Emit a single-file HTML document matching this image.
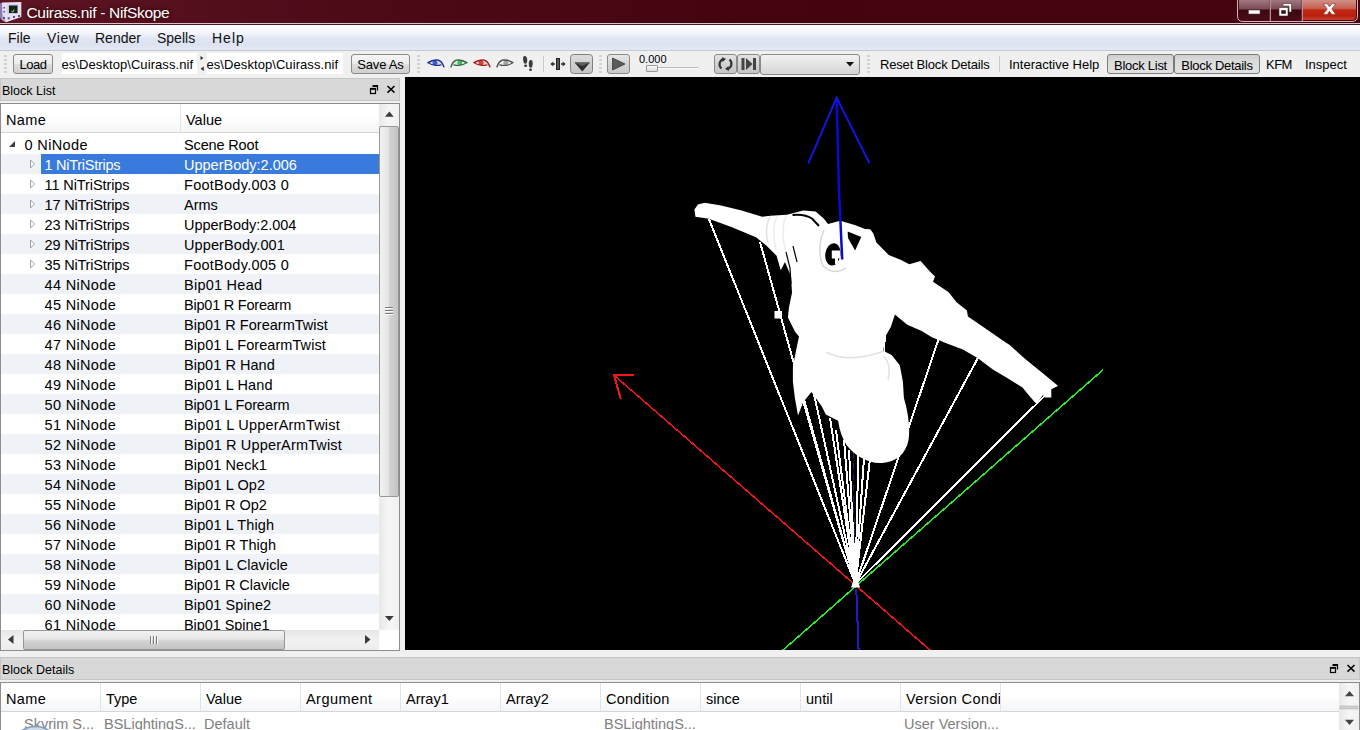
<!DOCTYPE html>
<html>
<head>
<meta charset="utf-8">
<title>Cuirass.nif - NifSkope</title>
<style>
*{box-sizing:border-box;margin:0;padding:0}
html,body{width:1360px;height:730px;overflow:hidden;background:#f0f0f0;font-family:"Liberation Sans",sans-serif;color:#000}
.abs{position:absolute}
#title{left:0;top:0;width:1360px;height:25px;background:linear-gradient(90deg,#5e1524 0%,#4d0a17 25%,#43040e 60%,#450510 100%);border-bottom:1px solid #4c1a24;box-shadow:inset 0 -1px 0 #dcc0c6}
#title .t{left:26.5px;top:4px;font-size:15.5px;letter-spacing:-0.32px;color:#fff;white-space:nowrap;text-shadow:0 0 4px #200}
#menu{left:0;top:25px;width:1360px;height:26px;background:linear-gradient(180deg,#ffffff 0%,#f4f6fb 30%,#e1e5f3 55%,#dde2f1 80%,#e6e9f5 100%);border-bottom:1px solid #c5c8d4}
#menu span{position:absolute;top:5px;font-size:14px;color:#111;white-space:nowrap}
#tool{left:0;top:51px;width:1360px;height:27px;background:#f0f0f0}
.btn{position:absolute;top:54px;height:21px;border:1px solid #8a8a8a;border-radius:3px;background:linear-gradient(180deg,#f6f6f6 0%,#ececec 48%,#dddddd 52%,#d0d0d0 100%);font-size:13px;text-align:center;line-height:19px;white-space:nowrap}
.btn.pr{background:linear-gradient(180deg,#cfcfcf 0%,#dadada 30%,#e2e2e2 100%);line-height:21px;border-color:#7c7c7c}
.edit{position:absolute;top:53px;height:21px;background:#fff;font-size:13px;line-height:23px;white-space:nowrap;overflow:hidden}
.tt{position:absolute;top:57px;font-size:13px;white-space:nowrap}
.grip{position:absolute;top:55px;width:3px;height:20px;background:repeating-linear-gradient(180deg,#d2d2d2 0 2px,transparent 2px 4px)}
.dockt{position:absolute;height:23px;background:#d8d8d8;border:1px solid #c6c6c6;font-size:12.5px;line-height:24px;overflow:hidden;padding-left:1px;white-space:nowrap}
#view{left:405px;top:77px;width:955px;height:573px;background:#000;overflow:hidden}
#tree{left:0;top:103px;width:400px;height:548px;background:#fff;border:1px solid #8a8c90;overflow:hidden}
.row{position:absolute;left:0;width:378px;height:20px;font-size:14.5px;line-height:22px;white-space:nowrap}
.row.alt{background:#eff2f7}
.row b{position:absolute;font-weight:normal;top:0;white-space:pre}
.row .sel{position:absolute;left:40px;top:0;width:338px;height:20px;background:#387bdc}
.row .ar{position:absolute}
.hdr{position:absolute;top:0;height:29px;background:linear-gradient(180deg,#ffffff 0%,#ffffff 45%,#f4f5f7 100%);border-right:1px solid #e0e3ea;border-bottom:1px solid #d5d5d5;font-size:14.5px;line-height:32px;white-space:nowrap;overflow:hidden}
.sbv{position:absolute;background:linear-gradient(90deg,#e8e8e8 0%,#f6f6f6 50%,#f0f0f0 100%)}
.thumbv{position:absolute;border:1px solid #979797;border-radius:2px;background:linear-gradient(90deg,#f2f2f2 0%,#e6e6e6 45%,#d2d2d2 55%,#c4c4c4 100%)}
.thumbh{position:absolute;border:1px solid #979797;border-radius:2px;background:linear-gradient(180deg,#f2f2f2 0%,#e6e6e6 45%,#d2d2d2 55%,#c4c4c4 100%)}
#det{left:0;top:682px;width:1360px;height:60px;background:#fff;border:1px solid #8a8c90;overflow:hidden}
#det .g{position:absolute;top:31px;font-size:14.5px;line-height:20px;color:#808080;white-space:nowrap}
</style>
</head>
<body>
<div id="title" class="abs"><span class="abs t">Cuirass.nif - NifSkope</span></div>
<svg class="abs" style="left:0;top:0" width="24" height="24" viewBox="0 0 24 24">
<path d="M2,2.600 L21.300,2 L21.300,17 L6,22.300 L1.500,19.500 Z" fill="#e6dff2"/>
<path d="M0,3.500 L2,2.600 L2.500,19.800 L0,18 Z" fill="#8c7cb6"/>
<path d="M2.500,14 L6,22.300 L1.500,19.500 Z" fill="#b0a4d0"/>
<path d="M7.500,4.500 H18 V14 H7.500 Z" fill="#cfc8e0"/>
<rect x="9" y="5.500" width="8.500" height="7.500" fill="#122412"/>
<path d="M11.500,11.500 L13,12 L14,9.500" stroke="#9ad09a" stroke-width="1" fill="none"/>
<g fill="#5c4c84"><rect x="3" y="17" width="2" height="2"/><rect x="7.700" y="17.300" width="2" height="2"/><rect x="13" y="16" width="2" height="2"/><rect x="18" y="15" width="2" height="2"/><rect x="3.500" y="7" width="1.500" height="1.500"/><rect x="3.500" y="11" width="1.500" height="1.500"/></g>
</svg>
<svg class="abs" style="left:1236px;top:0" width="124" height="24" viewBox="1236 0 124 24">
<defs>
<linearGradient id="wc1" x1="0" y1="0" x2="0" y2="1"><stop offset="0" stop-color="#a07880"/><stop offset="0.45" stop-color="#7c4a54"/><stop offset="0.5" stop-color="#3c0610"/><stop offset="1" stop-color="#4a0c16"/></linearGradient>
<linearGradient id="wc2" x1="0" y1="0" x2="0" y2="1"><stop offset="0" stop-color="#d09088"/><stop offset="0.42" stop-color="#c86050"/><stop offset="0.5" stop-color="#c02814"/><stop offset="0.8" stop-color="#b8200c"/><stop offset="1" stop-color="#c84030"/></linearGradient>
</defs>
<path d="M1237.500,-1 V16 Q1237.500,21.500 1243,21.500 H1352 Q1357.500,21.500 1357.500,16 V-1 Z" fill="#4a0a14" stroke="#d8b0b8" stroke-width="1"/>
<path d="M1239,0 V16 Q1239,20 1243,20 H1269.500 V0 Z" fill="url(#wc1)"/>
<rect x="1271" y="0" width="30.500" height="20" fill="url(#wc1)"/>
<path d="M1303,0 H1356 V16 Q1356,20 1352,20 H1303 Z" fill="url(#wc2)"/>
<path d="M1270.300,0 V21 M1302.300,0 V21" stroke="#d8b0b8" stroke-width="1"/>
<rect x="1248.500" y="10" width="11.500" height="4" fill="#fff" stroke="#5a4048" stroke-width="0.600"/>
<path d="M1283,3.500 H1291.500 V12 H1289 V6 H1283 Z" fill="#fff" stroke="#40262c" stroke-width="0.600"/>
<path d="M1279,7.500 H1288 V16 H1279 Z M1281.500,10.500 V13.500 H1285.500 V10.500 Z" fill="#fff" fill-rule="evenodd" stroke="#40262c" stroke-width="0.600"/>
<path d="M1323.300,3.800 L1327.300,3.800 L1329.500,6.800 L1331.700,3.800 L1335.700,3.800 L1331.800,9 L1335.900,14.400 L1331.700,14.400 L1329.500,11.300 L1327.300,14.400 L1323.100,14.400 L1327.200,9 Z" fill="#fff" stroke="#702018" stroke-width="0.600"/>
</svg>
<div id="menu" class="abs">
<span style="left:8px">File</span><span style="left:47px;letter-spacing:0.6px">View</span><span style="left:95px">Render</span><span style="left:157px">Spells</span><span style="left:212px;letter-spacing:1px">Help</span>
</div>
<div id="tool" class="abs"></div>
<div class="grip" style="left:4px"></div>
<div class="btn" style="left:13px;width:40px;height:20px;letter-spacing:-0.5px">Load</div>
<div class="edit" style="left:62px;width:135px;text-indent:-0.5px;letter-spacing:0.07px">es\Desktop\Cuirass.nif</div>
<div class="edit" style="left:207px;width:136px;text-indent:-0.5px;letter-spacing:0.07px">es\Desktop\Cuirass.nif</div>
<svg class="abs" style="left:198px;top:54px" width="8" height="20"><path d="M2.500,2 L5.500,4 L2.500,6 Z" fill="#333"/><path d="M5.800,12.500 L2.500,14.800 L5.800,17 Z" fill="#333"/></svg>
<div class="btn" style="left:351px;width:59px;height:20px;letter-spacing:-0.2px">Save As</div>
<div class="grip" style="left:417px"></div>
<svg class="abs" style="left:424px;top:52px" width="180" height="26" viewBox="424 52 180 26">
<defs>
<linearGradient id="bg1" x1="0" y1="0" x2="0" y2="1"><stop offset="0" stop-color="#dcdcdc"/><stop offset="0.5" stop-color="#d0d0d0"/><stop offset="1" stop-color="#c4c4c4"/></linearGradient>
</defs>
<!-- eyes -->
<path d="M428.0,62.6 Q433.0,59.3 438.5,60.1 Q441.8,62 441.8,64.6 Q434.0,67.2 428.0,62.6 Z" fill="#d8dcf4"/><circle cx="435.0" cy="62.9" r="2.5" fill="#3f5fd0"/><path d="M428.0,62.6 Q433.0,59.3 438.5,60.1 Q442.2,61.6 443.8,66.8" fill="none" stroke="#1a2a86" stroke-width="1.4" stroke-linecap="round"/><path d="M428.0,62.6 Q433.5,66.8 441.0,64.9" fill="none" stroke="#1a2a86" stroke-width="1.1" stroke-linecap="round"/>
<path d="M466.8,62.6 Q461.8,59.3 456.3,60.1 Q453.0,62 453.0,64.6 Q460.8,67.2 466.8,62.6 Z" fill="#d8f0dc"/><circle cx="459.8" cy="62.9" r="2.5" fill="#3fc060"/><path d="M466.8,62.6 Q461.8,59.3 456.3,60.1 Q452.6,61.6 451.0,66.8" fill="none" stroke="#3a5a40" stroke-width="1.4" stroke-linecap="round"/><path d="M466.8,62.6 Q461.3,66.8 453.8,64.9" fill="none" stroke="#3a5a40" stroke-width="1.1" stroke-linecap="round"/>
<path d="M474.0,62.6 Q479.0,59.3 484.5,60.1 Q487.8,62 487.8,64.6 Q480.0,67.2 474.0,62.6 Z" fill="#f4d8d8"/><circle cx="481.0" cy="62.9" r="2.5" fill="#e03838"/><path d="M474.0,62.6 Q479.0,59.3 484.5,60.1 Q488.2,61.6 489.8,66.8" fill="none" stroke="#a01818" stroke-width="1.4" stroke-linecap="round"/><path d="M474.0,62.6 Q479.5,66.8 487.0,64.9" fill="none" stroke="#a01818" stroke-width="1.1" stroke-linecap="round"/>
<path d="M512.8,62.6 Q507.8,59.3 502.3,60.1 Q499.0,62 499.0,64.6 Q506.8,67.2 512.8,62.6 Z" fill="#ececec"/><circle cx="505.8" cy="62.9" r="2.5" fill="#a0a0a0"/><path d="M512.8,62.6 Q507.8,59.3 502.3,60.1 Q498.6,61.6 497.0,66.8" fill="none" stroke="#484848" stroke-width="1.4" stroke-linecap="round"/><path d="M512.8,62.6 Q507.3,66.8 499.8,64.9" fill="none" stroke="#484848" stroke-width="1.1" stroke-linecap="round"/>
<!-- footprints -->
<g fill="#3c3c3c">
<path d="M524.6,56 C526.6,56 527.4,58.5 527.2,61 C527,63 526.2,63.8 525.2,63.8 C524.2,63.8 523.6,62.8 523.2,60.5 C522.8,58 523.2,56 524.6,56 Z"/>
<ellipse cx="525.6" cy="65.8" rx="1.5" ry="1.3"/>
<path d="M530.9,60 C532.6,60 533,62.500 532.6,65 C532.3,67 531.6,67.800 530.600,67.800 C529.600,67.800 529,66.800 528.800,64.500 C528.600,62 529.300,60 530.900,60 Z"/>
<ellipse cx="530.5" cy="69.8" rx="1.5" ry="1.3"/>
</g>
<rect x="543" y="56" width="1" height="16" fill="#c8c8c8"/>
<!-- move icon -->
<rect x="556.5" y="58.5" width="3" height="11" fill="#555" stroke="#222" stroke-width="1"/>
<path d="M555,64 H551.5 M564.500,64 H561" stroke="#333" stroke-width="1.4"/>
<path d="M550.3,64 L553.3,61.400 V66.600 Z M565.700,64 L562.700,61.400 V66.600 Z" fill="#333"/>
<!-- pressed button -->
<rect x="570.5" y="54.500" width="22" height="19" rx="3" fill="url(#bg1)" stroke="#808080"/>
<path d="M574.500,62.500 H590 L582.300,71.500 Z" fill="#303030"/>
<path d="M574.500,62.500 H590 L582.300,66 Z" fill="#606060"/>
</svg>
<div class="grip" style="left:599px"></div>
<div class="btn" style="left:607px;width:23px;top:54px;height:20px;background:linear-gradient(180deg,#e8e8e8,#d4d4d4 50%,#c8c8c8)"></div>
<svg class="abs" style="left:607px;top:54px" width="23" height="20"><path d="M5.500,4 L18,10 L5.500,16 Z" fill="#5a5a5a" stroke="#3a3a3a" stroke-width="0.8"/></svg>
<div class="abs" style="left:639px;top:54px;font-size:11px;line-height:11px;white-space:nowrap">0.000</div>
<div class="abs" style="left:650px;top:67px;width:48px;height:1px;background:#b8b8b8"></div>
<div class="abs" style="left:650px;top:68px;width:48px;height:1px;background:#fdfdfd"></div>
<div class="abs" style="left:646px;top:65px;width:12px;height:7px;border:1px solid #9a9a9a;border-radius:1px;background:linear-gradient(180deg,#fafafa,#dcdcdc)"></div>
<div class="btn" style="left:714px;width:23px;top:54px;height:20px;background:linear-gradient(180deg,#e4e4e4,#d2d2d2 50%,#c6c6c6)"></div>
<svg class="abs" style="left:714px;top:54px" width="23" height="20" fill="none"><path d="M7.500,14.500 A5.500,5.500 0 0 1 9,5.200" stroke="#333" stroke-width="2.200"/><path d="M15.500,5.500 A5.500,5.500 0 0 1 14,14.800" stroke="#333" stroke-width="2.200"/><path d="M8,3 L12,5 L8.500,8 Z M15,17 L11,15 L14.500,12 Z" fill="#333"/></svg>
<div class="btn" style="left:737px;width:23px;top:54px;height:20px;background:linear-gradient(180deg,#e4e4e4,#d2d2d2 50%,#c6c6c6)"></div>
<svg class="abs" style="left:737px;top:54px" width="23" height="20"><rect x="4.500" y="4" width="3" height="12" fill="#444"/><path d="M9,4 L15.500,10 L9,16 Z" fill="#444"/><rect x="16" y="4" width="3" height="12" fill="#444"/></svg>
<div class="btn" style="left:760px;width:100px;top:54px;height:21px;background:linear-gradient(180deg,#f2f2f2,#e4e4e4 50%,#d4d4d4)"></div>
<svg class="abs" style="left:845px;top:61px" width="10" height="6"><path d="M1,1 H9 L5,5.500 Z" fill="#111"/></svg>
<div class="grip" style="left:867px"></div>

<div class="tt" style="left:880px;letter-spacing:-0.17px">Reset Block Details</div><div class="abs" style="left:999px;top:56px;width:1px;height:16px;background:#c8c8c8"></div>
<div class="tt" style="left:1009px">Interactive Help</div>
<div class="btn pr" style="left:1107px;width:67px;top:54px;height:20px;letter-spacing:-0.27px">Block List</div>
<div class="btn pr" style="left:1174px;width:86px;top:54px;height:20px;letter-spacing:-0.29px">Block Details</div>
<div class="tt" style="left:1266px;letter-spacing:-0.5px">KFM</div>
<div class="tt" style="left:1305px">Inspect</div>

<div class="dockt" style="left:0;top:78px;width:400px">Block List</div>
<svg class="abs" style="left:366px;top:82px" width="32" height="14" viewBox="366 82 32 14"><path d="M372.5,85.500 H377.500 V90.500 M372.500,86.500 H377.500" stroke="#000" stroke-width="1.200" fill="none"/><rect x="370.500" y="88.500" width="5" height="5" fill="#d8d8d8" stroke="#000" stroke-width="1.200"/><path d="M370.500,89.300 H375.500" stroke="#000" stroke-width="1"/><path d="M387.500,86 L394.500,92.600 M394.500,86 L387.500,92.600" stroke="#000" stroke-width="1.500"/></svg>
<div id="tree" class="abs">
<div class="hdr" style="left:0;width:180px;padding-left:5px;letter-spacing:0.4px">Name</div>
<div class="hdr" style="left:180px;width:198px;padding-left:5px;border-right:none">Value</div>
<div class="row" style="top:30px"><svg class="ar" style="left:7px;top:6px" width="8" height="8" viewBox="0 0 8 8"><path d="M7 1 L7 7 L1 7 Z" fill="#404040"/></svg><b style="left:23.5px;letter-spacing:0.364px">0 NiNode</b><b style="left:183px;letter-spacing:-0.142px">Scene Root</b></div>
<div class="row alt" style="top:50px"><i class="sel"></i><svg class="ar" style="left:28px;top:5px" width="8" height="10" viewBox="0 0 8 10"><path d="M1.5 1 L5.5 5 L1.5 9 Z" fill="#fff" stroke="#a0a0a0" stroke-width="1"/></svg><b style="left:43.5px;letter-spacing:-0.270px;color:#fff">1 NiTriStrips</b><b style="left:183px;letter-spacing:0.003px;color:#fff">UpperBody:2.006</b></div>
<div class="row" style="top:70px"><svg class="ar" style="left:28px;top:5px" width="8" height="10" viewBox="0 0 8 10"><path d="M1.5 1 L5.5 5 L1.5 9 Z" fill="#fff" stroke="#a0a0a0" stroke-width="1"/></svg><b style="left:43.5px;letter-spacing:-0.094px">11 NiTriStrips</b><b style="left:183px;letter-spacing:0.268px">FootBody.003 0</b></div>
<div class="row alt" style="top:90px"><svg class="ar" style="left:28px;top:5px" width="8" height="10" viewBox="0 0 8 10"><path d="M1.5 1 L5.5 5 L1.5 9 Z" fill="#fff" stroke="#a0a0a0" stroke-width="1"/></svg><b style="left:43.5px;letter-spacing:-0.177px">17 NiTriStrips</b><b style="left:183px;letter-spacing:-0.015px">Arms</b></div>
<div class="row" style="top:110px"><svg class="ar" style="left:28px;top:5px" width="8" height="10" viewBox="0 0 8 10"><path d="M1.5 1 L5.5 5 L1.5 9 Z" fill="#fff" stroke="#a0a0a0" stroke-width="1"/></svg><b style="left:43.5px;letter-spacing:-0.177px">23 NiTriStrips</b><b style="left:183px;letter-spacing:-0.033px">UpperBody:2.004</b></div>
<div class="row alt" style="top:130px"><svg class="ar" style="left:28px;top:5px" width="8" height="10" viewBox="0 0 8 10"><path d="M1.5 1 L5.5 5 L1.5 9 Z" fill="#fff" stroke="#a0a0a0" stroke-width="1"/></svg><b style="left:43.5px;letter-spacing:-0.177px">29 NiTriStrips</b><b style="left:183px;letter-spacing:0.093px">UpperBody.001</b></div>
<div class="row" style="top:150px"><svg class="ar" style="left:28px;top:5px" width="8" height="10" viewBox="0 0 8 10"><path d="M1.5 1 L5.5 5 L1.5 9 Z" fill="#fff" stroke="#a0a0a0" stroke-width="1"/></svg><b style="left:43.5px;letter-spacing:-0.177px">35 NiTriStrips</b><b style="left:183px;letter-spacing:0.268px">FootBody.005 0</b></div>
<div class="row alt" style="top:170px"><b style="left:43.5px;letter-spacing:0.336px">44 NiNode</b><b style="left:183px;letter-spacing:0.247px">Bip01 Head</b></div>
<div class="row" style="top:190px"><b style="left:43.5px;letter-spacing:0.336px">45 NiNode</b><b style="left:183px;letter-spacing:-0.222px">Bip01 R Forearm</b></div>
<div class="row alt" style="top:210px"><b style="left:43.5px;letter-spacing:0.336px">46 NiNode</b><b style="left:183px;letter-spacing:0.024px">Bip01 R ForearmTwist</b></div>
<div class="row" style="top:230px"><b style="left:43.5px;letter-spacing:0.336px">47 NiNode</b><b style="left:183px;letter-spacing:0.069px">Bip01 L ForearmTwist</b></div>
<div class="row alt" style="top:250px"><b style="left:43.5px;letter-spacing:0.336px">48 NiNode</b><b style="left:183px;letter-spacing:0.047px">Bip01 R Hand</b></div>
<div class="row" style="top:270px"><b style="left:43.5px;letter-spacing:0.336px">49 NiNode</b><b style="left:183px;letter-spacing:0.105px">Bip01 L Hand</b></div>
<div class="row alt" style="top:290px"><b style="left:43.5px;letter-spacing:0.336px">50 NiNode</b><b style="left:183px;letter-spacing:-0.141px">Bip01 L Forearm</b></div>
<div class="row" style="top:310px"><b style="left:43.5px;letter-spacing:0.336px">51 NiNode</b><b style="left:183px;letter-spacing:0.196px">Bip01 L UpperArmTwist</b></div>
<div class="row alt" style="top:330px"><b style="left:43.5px;letter-spacing:0.336px">52 NiNode</b><b style="left:183px;letter-spacing:0.154px">Bip01 R UpperArmTwist</b></div>
<div class="row" style="top:350px"><b style="left:43.5px;letter-spacing:0.336px">53 NiNode</b><b style="left:183px;letter-spacing:0.068px">Bip01 Neck1</b></div>
<div class="row alt" style="top:370px"><b style="left:43.5px;letter-spacing:0.336px">54 NiNode</b><b style="left:183px;letter-spacing:0.102px">Bip01 L Op2</b></div>
<div class="row" style="top:390px"><b style="left:43.5px;letter-spacing:0.336px">55 NiNode</b><b style="left:183px;letter-spacing:-0.013px">Bip01 R Op2</b></div>
<div class="row alt" style="top:410px"><b style="left:43.5px;letter-spacing:0.336px">56 NiNode</b><b style="left:183px;letter-spacing:0.118px">Bip01 L Thigh</b></div>
<div class="row" style="top:430px"><b style="left:43.5px;letter-spacing:0.336px">57 NiNode</b><b style="left:183px;letter-spacing:0.031px">Bip01 R Thigh</b></div>
<div class="row alt" style="top:450px"><b style="left:43.5px;letter-spacing:0.336px">58 NiNode</b><b style="left:183px;letter-spacing:0.018px">Bip01 L Clavicle</b></div>
<div class="row" style="top:470px"><b style="left:43.5px;letter-spacing:0.336px">59 NiNode</b><b style="left:183px;letter-spacing:-0.039px">Bip01 R Clavicle</b></div>
<div class="row alt" style="top:490px"><b style="left:43.5px;letter-spacing:0.336px">60 NiNode</b><b style="left:183px;letter-spacing:0.076px">Bip01 Spine2</b></div>
<div class="row" style="top:510px"><b style="left:43.5px;letter-spacing:0.336px">61 NiNode</b><b style="left:183px;letter-spacing:-0.061px">Bip01 Spine1</b></div>
<div class="sbv" style="left:378px;top:0;width:20px;height:526px"></div>
<div class="thumbv" style="left:378px;top:22px;width:20px;height:371px"></div>
<svg class="abs" style="left:378px;top:0" width="20" height="526"><path d="M10.400,7.500 L14.700,12.700 H6 Z" fill="#3a3a3a"/><path d="M10.400,517 L14.700,512 H6 Z" fill="#3a3a3a"/><path d="M6,203.500 H14 M6,206.500 H14 M6,209.500 H14" stroke="#7a7a7a" stroke-width="1"/><path d="M6,204.500 H14 M6,207.500 H14 M6,210.500 H14" stroke="#fafafa" stroke-width="1"/></svg>
<div class="abs" style="left:0;top:526px;width:378px;height:20px;background:linear-gradient(180deg,#e6e6e6,#f2f2f2 50%,#ededed)"></div>
<div class="abs" style="left:378px;top:526px;width:20px;height:20px;background:#fff"></div>
<div class="thumbh" style="left:22px;top:526px;width:262px;height:20px"></div>
<svg class="abs" style="left:0;top:526px" width="378" height="20"><path d="M7,9.500 L12.500,5 V14 Z" fill="#3a3a3a"/><path d="M369.500,9.500 L364,5 V14 Z" fill="#3a3a3a"/><path d="M149.500,6 V14 M152.500,6 V14 M155.500,6 V14" stroke="#7a7a7a" stroke-width="1"/><path d="M150.500,6 V14 M153.500,6 V14 M156.500,6 V14" stroke="#fafafa" stroke-width="1"/></svg>
</div>
<div id="view" class="abs">
<svg class="abs" style="left:0;top:0" width="955" height="573" viewBox="405 77 955 573" shape-rendering="auto">
<g fill="none" stroke-linecap="butt" shape-rendering="crispEdges">
<!-- axes -->
<path d="M614,375.2 L930.5,650.5" stroke="#e81818" stroke-width="1.6"/>
<path d="M634,375.2 L614,375.2 L620.8,399" stroke="#e81818" stroke-width="2"/>
<path d="M1103,369.8 L782.5,650.5" stroke="#28e628" stroke-width="1.6"/>
<path d="M856.3,589 L858.6,651" stroke="#1c1cc8" stroke-width="2"/>
<path d="M853.2,430 L854.6,575" stroke="#20208a" stroke-width="1" stroke-dasharray="6 5"/>
<!-- bone lines -->
<g stroke="#fff" stroke-width="2">
<path d="M708.8,218.8 L855.5,584"/>
<path d="M760,242 L855.5,584"/>
<path d="M800,390 L855.5,584"/>
<path d="M812,385 L855.5,584"/>
<path d="M830,418 L855.5,584"/>
<path d="M836,430 L855.5,584"/>
<path d="M844,440 L855.5,584"/>
<path d="M849,450 L855.5,584"/>
<path d="M858.4,450 L855.5,584"/>
<path d="M864.5,450 L855.5,584"/>
<path d="M871,450 L855.5,584"/>
<path d="M939,338 L855.5,584"/>
<path d="M979,356 L855.5,584"/>
<path d="M1044.5,396 L855.5,584"/>
<path d="M885.2,334 L884.6,352" stroke-width="1.2"/>
</g>
</g>
<rect x="774.5" y="311" width="7.5" height="7.5" fill="#fff"/>
<path d="M854,579 L851,587.5 L860,587.5 L857.5,579 Z" fill="#fff"/>
<!-- body -->
<path fill="#fff" d="M694.4,209.5 L698,204.5 L704.7,202.7 L721,205.4 L741.7,210.6 L762.2,216.7 L770.4,215.7 L786.9,214.7 L803.3,210.6 L815.7,211.6 L823.9,218.8 L828,223.9 L840.3,220.8 L854.7,224.9 L865,229 L870.3,229.2 L873.2,233.2 L876.4,242.6 L888.8,254.9 L901.1,260.1 L909.3,264.2 L920.6,261.1 L929.9,271.4 L935,276.5 L933,281.7 L948.4,291.9 L956.6,302.2 L966.9,310.4 L967.9,316.6 L983.3,326.9 L1003.9,341.3 L1009.3,344.8 L1025.8,359.6 L1042.2,372.8 L1057,385.1 L1057.9,386 L1051.3,389.2 L1051.3,397.4 L1044.7,397.4 L1043,395 L1036.5,404 L1030.7,397.4 L1022.5,387.6 L1009.3,379.3 L992.9,369.5 L977.2,357.7 L962.8,349.5 L946.3,343.3 L931.9,337.2 L921.7,331 L907.3,324.8 L894.9,314.6 L890.8,326.9 L885.4,336.4 L883.3,350.8 L891.6,355 L899.8,365.2 L902.9,381.7 L903.9,398.1 C908,412 910.5,428 908.5,440 C906,454 896,462 882,463 C868,464 854,455 846.5,445 C842,438 839.5,430 838.1,420.7 L825.8,414.6 L821.7,406.3 L811.4,392 L803.2,402.2 L798,415.6 L794.9,398.1 L792.9,381.7 L792.9,367.3 L796,350.8 L799,336.4 L795.1,331.8 L787.9,317.4 L789,307.2 L792,292.8 L791,276.3 L785,262 L780.7,270.2 L776.6,255.8 L766.3,245.5 L756,237.3 L731.4,227 L708.8,218.8 L695.4,216.7 Z"/>
<!-- collar holes -->
<ellipse cx="832.9" cy="254.3" rx="7.6" ry="11.2" fill="#000" transform="rotate(8 832.9 254.3)"/>
<path d="M847.7,231.5 L861.3,237 L855.1,250.6 L848,238 Z" fill="#000"/>
<path d="M831.8,250.6 H840.4 V258.5 H838 V264 H835 V258.5 H831.8 Z" fill="#fff"/>
<!-- fringe gaps -->
<g stroke="#000" stroke-width="1.2" fill="none">
<path d="M786,252 L790,268 L791,284"/>
<path d="M793,246 L797,262"/>
<path d="M792.5,215 Q804,213.5 812,218.5 L819,226" stroke-width="2"/>
</g>
<!-- soft shading -->
<g stroke="#e2e2e2" stroke-width="1.5" fill="none">
<path d="M826,352 Q848,364 884,351"/>
<path d="M770,217 Q764,228 768,243"/><path d="M777,216 Q771,230 776,250" stroke="#ececec"/><path d="M786,215 Q780,232 786,252" stroke="#ececec"/>
<path d="M824,230 Q816,250 823,266 Q834,276 846,268" stroke="#d8d8d8"/>
<path d="M884,356 Q892,366 888,380"/>
</g>
<!-- blue up axis -->
<path d="M836.6,97.5 L839,190 L842.2,259.5" stroke="#0a0ad0" stroke-width="2.5" fill="none"/>
<path d="M808.3,163.3 L836.6,97.5 L869.5,163.3" stroke="#1414e6" stroke-width="2" fill="none"/>
</svg>

</div>
<div class="dockt" style="left:0;top:657px;width:1360px">Block Details</div>
<svg class="abs" style="left:1326px;top:661px" width="32" height="14" viewBox="366 82 32 14"><path d="M372.500,85.500 H377.500 V90.500 M372.500,86.500 H377.500" stroke="#000" stroke-width="1.200" fill="none"/><rect x="370.500" y="88.500" width="5" height="5" fill="#d8d8d8" stroke="#000" stroke-width="1.200"/><path d="M370.500,89.300 H375.500" stroke="#000" stroke-width="1"/><path d="M387.500,86 L394.500,92.600 M394.500,86 L387.500,92.600" stroke="#000" stroke-width="1.500"/></svg>
<div id="det" class="abs">
<div class="hdr" style="left:0;width:100px;padding-left:5px;letter-spacing:0.4px">Name</div>
<div class="hdr" style="left:100px;width:100px;padding-left:5px">Type</div>
<div class="hdr" style="left:200px;width:100px;padding-left:5px">Value</div>
<div class="hdr" style="left:300px;width:100px;padding-left:5px;letter-spacing:0.45px">Argument</div>
<div class="hdr" style="left:400px;width:100px;padding-left:5px">Array1</div>
<div class="hdr" style="left:500px;width:100px;padding-left:5px">Array2</div>
<div class="hdr" style="left:600px;width:100px;padding-left:5px;letter-spacing:0.25px">Condition</div>
<div class="hdr" style="left:700px;width:100px;padding-left:5px">since</div>
<div class="hdr" style="left:800px;width:100px;padding-left:5px">until</div>
<div class="hdr" style="left:900px;width:100px;padding-left:5px;overflow:hidden;letter-spacing:0.4px">Version Condition</div>
<div class="hdr" style="left:1000px;width:338px;border-right:none"></div>
<span class="g" style="left:23px">Skyrim S...</span>
<span class="g" style="left:103px">BSLightingS...</span>
<span class="g" style="left:203px">Default</span>
<span class="g" style="left:603px">BSLightingS...</span>
<span class="g" style="left:903px">User Version...</span>
<div class="sbv" style="left:1338px;top:0;width:20px;height:60px"></div>
<svg class="abs" style="left:1338px;top:0" width="20" height="48"><path d="M10.500,8 L15,13.200 H6 Z" fill="#444"/><path d="M10.500,42 L15,36.800 H6 Z" fill="#444"/><rect x="1" y="23" width="18" height="3" fill="#d0d0d0" stroke="#a8a8a8" stroke-width="0.500"/></svg>
<svg class="abs" style="left:5px;top:38px" width="60" height="12"><circle cx="29.500" cy="29.500" r="24" fill="#cfdcea" stroke="#7e9ab8" stroke-width="1.500"/></svg>
</div>
</body>
</html>
